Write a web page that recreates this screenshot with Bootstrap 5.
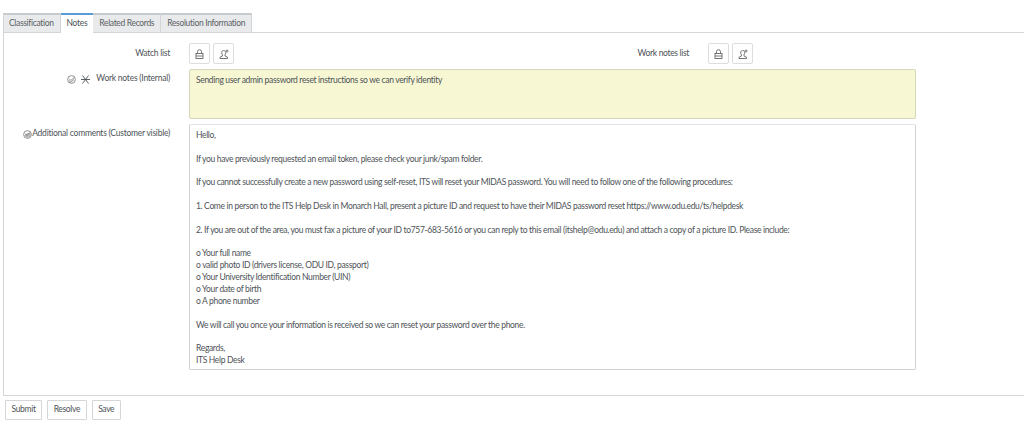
<!DOCTYPE html>
<html lang="en">
<head>
<meta charset="utf-8">
<title>Notes</title>
<link href="https://cdn.jsdelivr.net/npm/bootstrap@5.3.0/dist/css/bootstrap.min.css" rel="stylesheet">
<style>
html,body{height:430px;overflow:hidden}
body{font-family:"Lato","Liberation Sans",sans-serif;font-size:8.5px;letter-spacing:-.33px;line-height:11.85px;color:#4e5358;background:#fff;padding-top:13px}
.tabstrip{margin:0 0 0 3px;padding:0;list-style:none;display:flex;height:20px;border-bottom:1px solid #d5d6d8}
.tabitem{background:#e8eaeb;border:1px solid #d3d5d7;border-left:0;border-top:2px solid #c8cbce;padding:3px 6px 0;height:20px;color:#5c6166}
.tabitem:first-child{border-left:1px solid #d3d5d7;padding-left:5px}
.tabitem.on{background:#fff;border-top:2px solid #5b9bd5;border-bottom-color:#fff;color:#4e5358;border-left:0;border-right:0;padding:3px 6px 0}
.panebox{margin-left:3px;height:363px;border-left:1px solid #d5d6d8;border-bottom:1px solid #d5d6d8;padding-top:10px}
.watchrow{height:21px;margin-bottom:5px}
.lbl{width:166px;text-align:right;margin-right:19px;flex:none;padding-top:4px;letter-spacing:-.24px}
.lbl2{width:455px;text-align:right;margin-right:19px;flex:none}
.sqbtn{width:21px;height:21px;border:1px solid #dcdddf;border-radius:2px;background:#fff;padding:0;display:flex;align-items:center;justify-content:center}
.btnpair{gap:3px}
.notes-yellow{width:727px;height:50px;background:#f7f7d3;border:1px solid #d6d6b8;border-radius:2px;padding:5px 6px;margin-bottom:5px}
.comments{width:727px;height:246px;background:#fff;border:1px solid #cfd1d3;border-top-color:#e2e2ea;border-radius:2px;padding:5px 6px 0;white-space:pre-line}
.lblicons{display:inline-flex;align-items:center;vertical-align:top;height:12px}
.staricon{margin:0 6px 0 5px}
.actbtn{height:20px;border:1px solid #d5d6d8;border-radius:1px;background:#fff;color:#4e5358;font:inherit;letter-spacing:inherit;padding:0 5.5px}
.actions{padding:4px 0 0 5px;gap:5px}
</style>
</head>
<body>
<ul class="tabstrip">
  <li class="tabitem">Classification</li>
  <li class="tabitem on">Notes</li>
  <li class="tabitem">Related Records</li>
  <li class="tabitem">Resolution Information</li>
</ul>
<div class="panebox">
  <div class="d-flex align-items-center watchrow">
    <div class="lbl pt-0">Watch list</div>
    <div class="d-flex btnpair">
      <button class="sqbtn" aria-label="Lock"><svg width="9" height="10" viewBox="0 0 9 10" fill="none" stroke="#666" stroke-width=".9"><rect x="1" y="4.500" width="7" height="5"/><path d="M2.500 4.500V2.700a2 2 0 0 1 4 0v1.800M1 7h7"/></svg></button>
      <button class="sqbtn" aria-label="Add me"><svg width="10" height="10" viewBox="0 0 10 10" fill="none" stroke="#666" stroke-width=".9"><path d="M1 9.500h7.500V8.200L6 7V5.700c.5-.4.7-1.100.7-2C6.700 2.300 5.800 1.500 4.700 1.500S2.700 2.300 2.700 3.700c0 .9.200 1.600.7 2V7L1 8.200zM8 .5v3M6.500 2h3"/></svg></button>
    </div>
    <div class="lbl2">Work notes list</div>
    <div class="d-flex btnpair">
      <button class="sqbtn" aria-label="Lock"><svg width="9" height="10" viewBox="0 0 9 10" fill="none" stroke="#666" stroke-width=".9"><rect x="1" y="4.500" width="7" height="5"/><path d="M2.500 4.500V2.700a2 2 0 0 1 4 0v1.800M1 7h7"/></svg></button>
      <button class="sqbtn" aria-label="Add me"><svg width="10" height="10" viewBox="0 0 10 10" fill="none" stroke="#666" stroke-width=".9"><path d="M1 9.500h7.500V8.200L6 7V5.700c.5-.4.7-1.100.7-2C6.700 2.300 5.800 1.500 4.700 1.500S2.700 2.300 2.700 3.700c0 .9.200 1.600.7 2V7L1 8.200zM8 .5v3M6.500 2h3"/></svg></button>
    </div>
  </div>
  <div class="d-flex">
    <div class="lbl"><span class="lblicons"><svg width="9" height="9" viewBox="0 0 10 10" fill="none" stroke="#777" stroke-width=".9"><circle cx="5" cy="5" r="4.300"/><path d="M2.500 4.500 4.300 6 7.800 3M2.200 6.300 4.300 8 7.800 5"/></svg><svg class="staricon" width="9" height="9" viewBox="0 0 9 9" fill="none" stroke="#4a4f54" stroke-width=".9"><path d="M0 4.500h9M1.500 .5l6 8M7.500 .5l-6 8"/></svg></span>Work notes (Internal)</div>
    <div class="notes-yellow">Sending user admin password reset instructions so we can verify identity</div>
  </div>
  <div class="d-flex">
    <div class="lbl"><span class="lblicons"><svg width="9" height="9" viewBox="0 0 10 10" stroke="#777" stroke-width=".9"><circle cx="5" cy="5" r="4.300" fill="none"/><path d="M1 6.200 4.300 3.600 8.800 2.800 9 5.500 7 8.500 4 9 1.800 8z" fill="#bbb" stroke="none"/><path d="M2.500 4.500 4.300 6 7.800 3" fill="none"/></svg></span>Additional comments (Customer visible)</div>
    <div class="comments">Hello,

If you have previously requested an email token, please check your junk/spam folder.

If you cannot successfully create a new password using self-reset, ITS will reset your MIDAS password. You will need to follow one of the following procedures:

1. Come in person to the ITS Help Desk in Monarch Hall, present a picture ID and request to have their MIDAS password reset https://www.odu.edu/ts/helpdesk

2. If you are out of the area, you must fax a picture of your ID to757-683-5616 or you can reply to this email (itshelp@odu.edu) and attach a copy of a picture ID. Please include:

o Your full name
o valid photo ID (drivers license, ODU ID, passport)
o Your University Identification Number (UIN)
o Your date of birth
o A phone number

We will call you once your information is received so we can reset your password over the phone.

Regards,
ITS Help Desk</div>
  </div>
</div>
<div class="d-flex actions">
  <button class="actbtn">Submit</button>
  <button class="actbtn">Resolve</button>
  <button class="actbtn">Save</button>
</div>
</body>
</html>
